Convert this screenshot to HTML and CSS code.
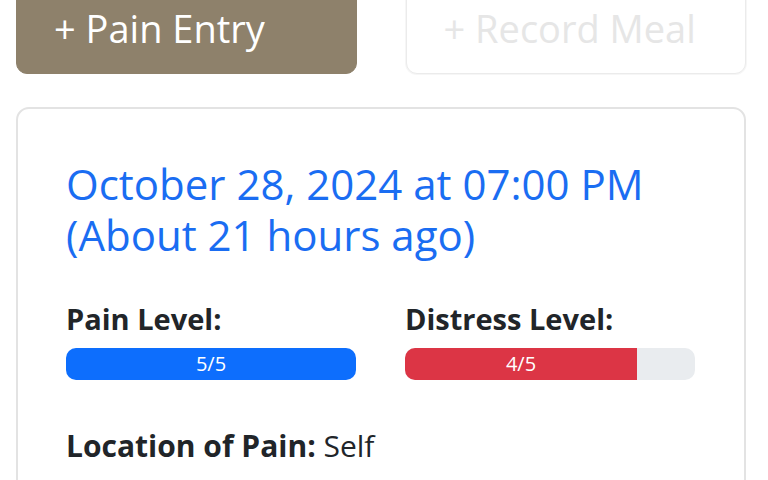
FILE: index.html
```html
<!DOCTYPE html>
<html>
<head>
    <title>Pain Journal</title>
    <meta charset="UTF-8">
    <link rel="stylesheet" href="styles.css">
</head>

<body>
    <div id="pageDiv">
        <div class="actionRow">
            <button class="actionBtn primaryBtn">+ Pain Entry</button>
            <button class="actionBtn ghostBtn">+ Record Meal</button>
        </div>

        <div class="entryCard">
            <h2 class="entryTitle">October 28, 2024 at 07:00 PM<br />(About 21 hours ago)</h2>

            <div class="levelRow">
                <div class="levelCol">
                    <div class="levelLabel">Pain Level:</div>
                    <div class="levelTrack">
                        <div class="levelFill fillBlue" style="width: 100%">5/5</div>
                    </div>
                </div>
                <div class="levelCol">
                    <div class="levelLabel">Distress Level:</div>
                    <div class="levelTrack">
                        <div class="levelFill fillRed" style="width: 80%">4/5</div>
                    </div>
                </div>
            </div>

            <div class="detailLine"><b>Location of Pain:</b> Self</div>
        </div>
    </div>
</body>

</html>
```

FILE: styles.css
```css
body {
    margin: 0;
    background-color: #ffffff;
    font-family: "Open Sans", "Noto Sans", sans-serif;
    color: #212529;
    overflow: hidden;
}

#pageDiv {
    padding: 0 22px 0 16px;
}

.actionRow {
    display: grid;
    grid-template-columns: 1fr 1fr;
    gap: 49px;
    margin-top: -24px;
}

.actionBtn {
    display: block;
    padding: 26px 0 20px 37px;
    border-radius: 11px;
    font-family: "Open Sans", "Noto Sans", sans-serif;
    font-size: 38px;
    line-height: 50px;
    text-align: left;
}

.primaryBtn {
    background-color: #8e816b;
    border: 1px solid #8e816b;
    color: #ffffff;
}

.ghostBtn {
    background-color: #ffffff;
    border: 1px solid #ebebeb;
    color: #e6e6e6;
    box-shadow: 0 0 0 1px #f6f6f6;
}

.entryCard {
    margin-top: 33px;
    border: 2px solid #e3e3e3;
    border-radius: 13px;
    padding: 49px 49px 40px 48px;
    height: 400px;
}

.entryTitle {
    margin: 0;
    font-size: 42px;
    font-weight: 400;
    line-height: 51px;
    color: #1a6df2;
}

.levelRow {
    display: grid;
    grid-template-columns: 1fr 1fr;
    gap: 49px;
    margin-top: 41px;
}

.levelLabel {
    font-size: 29px;
    font-weight: 700;
    line-height: 36px;
}

.levelTrack {
    margin-top: 11px;
    height: 32px;
    border-radius: 10px;
    background-color: #e9ecef;
    overflow: hidden;
}

.levelFill {
    height: 100%;
    color: #ffffff;
    font-size: 20px;
    line-height: 32px;
    text-align: center;
}

.fillBlue {
    background-color: #0d6efd;
}

.fillRed {
    background-color: #dc3545;
}

.detailLine {
    margin-top: 48px;
    font-size: 30px;
    line-height: 36px;
}
```
